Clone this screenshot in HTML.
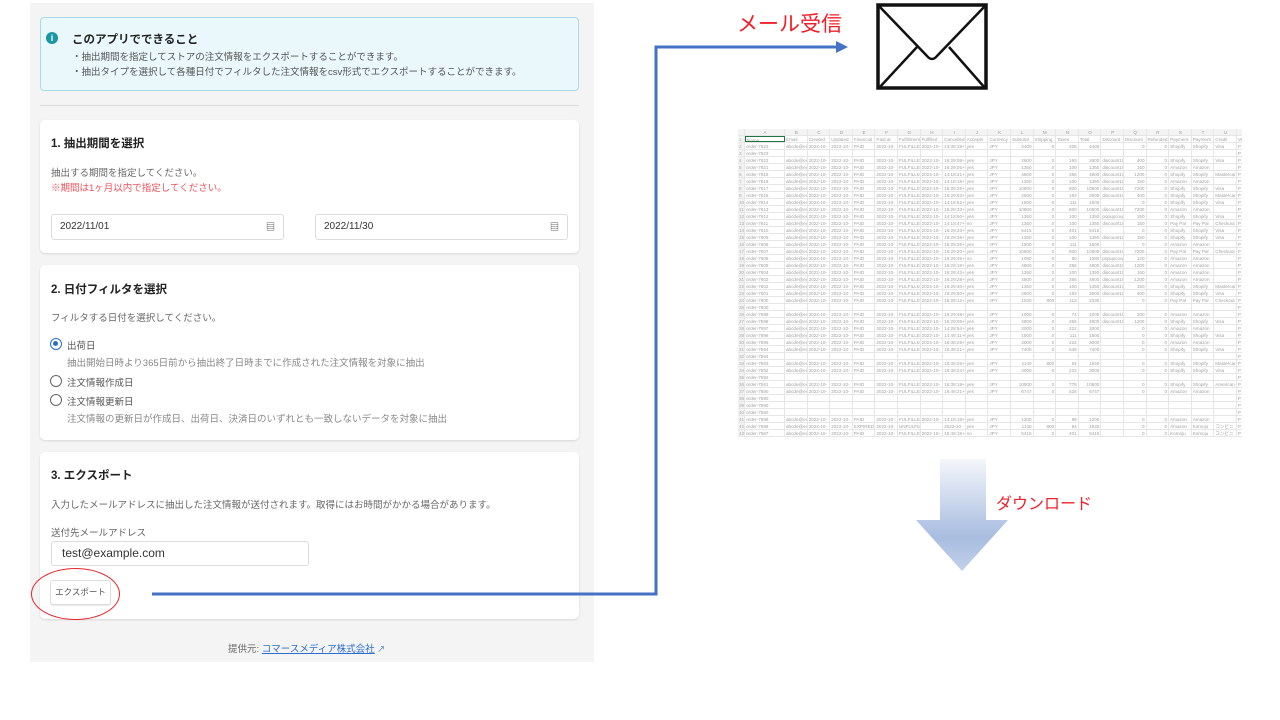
<!DOCTYPE html>
<html><head><meta charset="utf-8"><style>
*{margin:0;padding:0;box-sizing:border-box}
body{width:1280px;height:720px;background:#fff;position:relative;overflow:hidden;font-family:"Liberation Sans","Noto Sans CJK JP",sans-serif;color:#333}
.a{position:absolute;white-space:nowrap}
.panel{position:absolute;left:30px;top:3px;width:564px;height:659px;background:#f4f4f5}
.card{position:absolute;left:40px;width:539px;background:#fff;border-radius:5px;box-shadow:0 1px 2px rgba(0,0,0,.12)}
.t{font-size:11.5px;font-weight:bold;color:#222}
.s{font-size:9.5px;color:#666}
.inp{position:absolute;border:1px solid #dcdcdc;border-radius:3px;background:#fff;font-size:10px;color:#333;padding-left:8px;line-height:26px}
.rad{position:absolute;width:12px;height:12px;border:1.3px solid #666;border-radius:50%}
.sheet{position:absolute;left:738px;top:129px;width:504px;height:312px;font-family:"Liberation Sans",sans-serif;font-size:4.6px;color:#a0a0a0;overflow:hidden;background-color:#fff}
.r{position:absolute;left:0;height:7px;line-height:7px;display:flex;width:520px;border-bottom:1px solid #e6e6e6}
.r i{font-style:normal;display:block;width:22.6px;overflow:hidden;border-right:1px solid #e6e6e6;padding-left:1px;flex:none}
.r i:first-child{width:7px;color:#aaa;background:#f3f3f3}
.r i:nth-child(2){width:40px}
.r i.n{text-align:right;padding-right:1px}
</style></head><body>
<div class="panel"></div>
<div class="a" style="left:40px;top:17px;width:539px;height:74px;background:#eaf7fb;border:1px solid #a9dbe4;border-radius:4px"></div>
<div class="a" style="left:46px;top:32px;width:12px;height:12px;border-radius:50%;background:#1b97a4;color:#fff;font-size:9px;font-weight:bold;text-align:center;line-height:12px">i</div>
<div class="a t" style="left:72px;top:31px">このアプリでできること</div>
<div class="a s" style="left:72px;top:49px;color:#555">・抽出期間を指定してストアの注文情報をエクスポートすることができます。</div>
<div class="a s" style="left:72px;top:64px;color:#555">・抽出タイプを選択して各種日付でフィルタした注文情報をcsv形式でエクスポートすることができます。</div>
<div class="a" style="left:40px;top:105px;width:539px;height:1px;background:#ddd"></div>

<div class="card" style="top:120px;height:133px"></div>
<div class="a t" style="left:51px;top:135px">1. 抽出期間を選択</div>
<div class="a s" style="left:51px;top:165px">抽出する期間を指定してください。</div>
<div class="a s" style="left:51px;top:180px;color:#f0505a">※期間は1ヶ月以内で指定してください。</div>
<div class="inp" style="left:51px;top:214px;width:233px;height:26px;line-height:24px">2022/11/01<span style="position:absolute;right:8px;top:0;font-size:9px">&#x25A4;</span></div>
<div class="inp" style="left:315px;top:214px;width:253px;height:26px;line-height:24px">2022/11/30<span style="position:absolute;right:8px;top:0;font-size:9px">&#x25A4;</span></div>

<div class="card" style="top:265px;height:175px"></div>
<div class="a t" style="left:51px;top:281px">2. 日付フィルタを選択</div>
<div class="a s" style="left:51px;top:310px">フィルタする日付を選択してください。</div>
<div class="rad" style="left:50px;top:338px;border-color:#2c6ecb"><div style="position:absolute;left:2.2px;top:2.2px;width:5px;height:5px;border-radius:50%;background:#2c6ecb"></div></div>
<div class="a s" style="left:67px;top:338px;color:#555">出荷日</div>
<div class="a s" style="left:67px;top:355px;color:#888">抽出開始日時より365日前から抽出終了日時までに作成された注文情報を対象に抽出</div>
<div class="rad" style="left:50px;top:375px"></div>
<div class="a s" style="left:67px;top:375px;color:#555">注文情報作成日</div>
<div class="rad" style="left:50px;top:394px"></div>
<div class="a s" style="left:67px;top:394px;color:#555">注文情報更新日</div>
<div class="a s" style="left:67px;top:411px;color:#888">注文情報の更新日が作成日、出荷日、決済日のいずれとも一致しないデータを対象に抽出</div>

<div class="card" style="top:452px;height:167px"></div>
<div class="a t" style="left:51px;top:467px">3. エクスポート</div>
<div class="a s" style="left:51px;top:497px">入力したメールアドレスに抽出した注文情報が送付されます。取得にはお時間がかかる場合があります。</div>
<div class="a s" style="left:51px;top:525px">送付先メールアドレス</div>
<div class="inp" style="left:51px;top:541px;width:258px;height:25px;font-size:12px;padding-left:10px;line-height:23px">test@example.com</div>
<div class="a" style="left:50px;top:580px;width:61px;height:25px;border:1px solid #ddd;border-radius:3px;background:#fff;box-shadow:0 1px 1px rgba(0,0,0,.1);font-size:8.5px;color:#555;text-align:center;line-height:23px">エクスポート</div>
<div class="a" style="left:31px;top:568px;width:89px;height:52px;border:1.3px solid #e8252b;border-radius:50%"></div>
<div class="a" style="left:228px;top:641px;font-size:9.5px;color:#666">提供元: <span style="color:#2c6ecb;text-decoration:underline">コマースメディア株式会社</span> <span style="color:#2c6ecb;font-size:8px">&#x2197;</span></div>

<svg class="a" style="left:0;top:0" width="1280" height="720">
<polyline points="152,594 656,594 656,47 838,47" fill="none" stroke="#4472c4" stroke-width="3"/>
<polygon points="836,41 848,47 836,53" fill="#4472c4"/>
<rect x="878" y="5" width="108" height="83" fill="#fff" stroke="#111" stroke-width="3.5"/>
<path d="M878,5 L927,56 Q932,62 937,56 L986,5" fill="none" stroke="#111" stroke-width="2.5"/>
<path d="M879,88 L917,47 M985,88 L949,47" fill="none" stroke="#111" stroke-width="2.5"/>
<defs><linearGradient id="g" x1="0" y1="0" x2="0" y2="1"><stop offset="0" stop-color="#f4f6fb"/><stop offset="0.7" stop-color="#a8bde0"/><stop offset="1" stop-color="#c2d0ea"/></linearGradient></defs>
<polygon points="940,459 986,459 986,520 1008,520 962,571 916,520 940,520" fill="url(#g)"/>
</svg>
<div class="a" style="left:737px;top:8px;font-size:21px;color:#f0202a">メール受信</div>
<div class="a" style="left:996px;top:490px;font-size:16px;color:#f0202a">ダウンロード</div>

<div class="sheet">
<div class="r" style="top:0;background:#f3f3f3;color:#999;text-align:center"><i></i><i style="text-align:center">A</i><i>B</i><i>C</i><i>D</i><i>E</i><i>F</i><i>G</i><i>H</i><i>I</i><i>J</i><i>K</i><i>L</i><i>M</i><i>N</i><i>O</i><i>P</i><i>Q</i><i>R</i><i>S</i><i>T</i><i>U</i><i>V</i></div>
<div class="r" style="top:7px"><i>1</i><i style="border:1px solid #217346">Name</i><i>Email</i><i>Created at</i><i>Updated at</i><i>Financial Sta</i><i>Paid at</i><i>Fulfillment St</i><i>Fulfilled at</i><i>Cancelled at</i><i>Accepts Mar</i><i>Currency</i><i>Subtotal</i><i>Shipping</i><i>Taxes</i><i>Total</i><i>Discount Co</i><i>Discount Am</i><i>Refunded An</i><i>Payment Me</i><i>Payment Me</i><i>Credit Brand</i><i>Ve</i></div>
<div class="r" style="top:14px"><i>2</i><i>order-7623</i><i>abcde@exam</i><i>2022-10-07T</i><i>2022-10-11T</i><i>PAID</i><i>2022-10-07T</i><i>FULFILLED</i><i>2022-10-11T</i><i>13:38:19+09</i><i>yes</i><i>JPY</i><i class="n">4400</i><i class="n">0</i><i class="n">326</i><i class="n">4400</i><i></i><i class="n">0</i><i class="n">0</i><i>Shopify Pay</i><i>Shopify Pay</i><i>Visa</i><i>P</i></div>
<div class="r" style="top:21px"><i>3</i><i>order-7623</i><i></i><i></i><i></i><i></i><i></i><i></i><i></i><i></i><i></i><i></i><i></i><i></i><i></i><i></i><i></i><i></i><i></i><i></i><i></i><i></i><i>P</i></div>
<div class="r" style="top:28px"><i>4</i><i>order-7622</i><i>abcde@exam</i><i>2022-10-07T</i><i>2022-10-07T</i><i>PAID</i><i>2022-10-07T</i><i>FULFILLED</i><i>2022-10-07T</i><i>16:29:08+09</i><i>yes</i><i>JPY</i><i class="n">2600</i><i class="n">0</i><i class="n">193</i><i class="n">2600</i><i>discount100</i><i class="n">400</i><i class="n">0</i><i>Shopify Pay</i><i>Shopify Pay</i><i>Visa</i><i>P</i></div>
<div class="r" style="top:35px"><i>5</i><i>order-7621</i><i>abcde@exam</i><i>2022-10-07T</i><i>2022-10-07T</i><i>PAID</i><i>2022-10-07T</i><i>FULFILLED</i><i>2022-10-07T</i><i>16:29:05+09</i><i>yes</i><i>JPY</i><i class="n">1350</i><i class="n">0</i><i class="n">100</i><i class="n">1350</i><i>discount100</i><i class="n">150</i><i class="n">0</i><i>Amazon Pay</i><i>Amazon Pay</i><i></i><i>P</i></div>
<div class="r" style="top:42px"><i>6</i><i>order-7619</i><i>abcde@exam</i><i>2022-10-06T</i><i>2022-10-07T</i><i>PAID</i><i>2022-10-06T</i><i>FULFILLED</i><i>2022-10-07T</i><i>14:18:21+09</i><i>yes</i><i>JPY</i><i class="n">4800</i><i class="n">0</i><i class="n">356</i><i class="n">4800</i><i>discount100</i><i class="n">1200</i><i class="n">0</i><i>Shopify Pay</i><i>Shopify Pay</i><i>Mastercard</i><i>P</i></div>
<div class="r" style="top:49px"><i>7</i><i>order-7618</i><i>abcde@exam</i><i>2022-10-06T</i><i>2022-10-07T</i><i>PAID</i><i>2022-10-06T</i><i>FULFILLED</i><i>2022-10-07T</i><i>14:18:18+09</i><i>yes</i><i>JPY</i><i class="n">1350</i><i class="n">0</i><i class="n">100</i><i class="n">1350</i><i>discount100</i><i class="n">150</i><i class="n">0</i><i>Amazon Pay</i><i>Amazon Pay</i><i></i><i>P</i></div>
<div class="r" style="top:56px"><i>8</i><i>order-7617</i><i>abcde@exam</i><i>2022-10-06T</i><i>2022-10-06T</i><i>PAID</i><i>2022-10-06T</i><i>FULFILLED</i><i>2022-10-06T</i><i>16:29:25+09</i><i>yes</i><i>JPY</i><i class="n">10800</i><i class="n">0</i><i class="n">800</i><i class="n">10800</i><i>discount100</i><i class="n">7200</i><i class="n">0</i><i>Shopify Pay</i><i>Shopify Pay</i><i>Visa</i><i>P</i></div>
<div class="r" style="top:63px"><i>9</i><i>order-7616</i><i>abcde@exam</i><i>2022-10-06T</i><i>2022-10-06T</i><i>PAID</i><i>2022-10-06T</i><i>FULFILLED</i><i>2022-10-06T</i><i>16:29:53+09</i><i>yes</i><i>JPY</i><i class="n">2600</i><i class="n">0</i><i class="n">193</i><i class="n">2600</i><i>discount100</i><i class="n">400</i><i class="n">0</i><i>Shopify Pay</i><i>Shopify Pay</i><i>Mastercard</i><i>P</i></div>
<div class="r" style="top:70px"><i>10</i><i>order-7614</i><i>abcde@exam</i><i>2022-10-06T</i><i>2022-10-06T</i><i>PAID</i><i>2022-10-06T</i><i>FULFILLED</i><i>2022-10-06T</i><i>14:18:52+09</i><i>yes</i><i>JPY</i><i class="n">1500</i><i class="n">0</i><i class="n">111</i><i class="n">1500</i><i></i><i class="n">0</i><i class="n">0</i><i>Shopify Pay</i><i>Shopify Pay</i><i>Visa</i><i>P</i></div>
<div class="r" style="top:77px"><i>11</i><i>order-7613</i><i>abcde@exam</i><i>2022-10-06T</i><i>2022-10-06T</i><i>PAID</i><i>2022-10-06T</i><i>FULFILLED</i><i>2022-10-06T</i><i>16:29:33+09</i><i>yes</i><i>JPY</i><i class="n">10800</i><i class="n">0</i><i class="n">800</i><i class="n">10800</i><i>discount100</i><i class="n">7200</i><i class="n">0</i><i>Amazon Pay</i><i>Amazon Pay</i><i></i><i>P</i></div>
<div class="r" style="top:84px"><i>12</i><i>order-7612</i><i>abcde@exam</i><i>2022-10-06T</i><i>2022-10-06T</i><i>PAID</i><i>2022-10-06T</i><i>FULFILLED</i><i>2022-10-06T</i><i>14:18:50+09</i><i>yes</i><i>JPY</i><i class="n">1350</i><i class="n">0</i><i class="n">100</i><i class="n">1350</i><i>popupcoupon</i><i class="n">150</i><i class="n">0</i><i>Shopify Pay</i><i>Shopify Pay</i><i>Visa</i><i>P</i></div>
<div class="r" style="top:91px"><i>13</i><i>order-7611</i><i>abcde@exam</i><i>2022-10-06T</i><i>2022-10-06T</i><i>PAID</i><i>2022-10-06T</i><i>FULFILLED</i><i>2022-10-06T</i><i>14:18:47+09</i><i>no</i><i>JPY</i><i class="n">1350</i><i class="n">0</i><i class="n">100</i><i class="n">1350</i><i>discount100</i><i class="n">150</i><i class="n">0</i><i>Pay Pal Exp</i><i>Pay Pal Express</i><i>Checkout</i><i>P</i></div>
<div class="r" style="top:98px"><i>14</i><i>order-7610</i><i>abcde@exam</i><i>2022-10-06T</i><i>2022-10-06T</i><i>PAID</i><i>2022-10-06T</i><i>FULFILLED</i><i>2022-10-06T</i><i>16:29:23+09</i><i>yes</i><i>JPY</i><i class="n">5415</i><i class="n">0</i><i class="n">401</i><i class="n">5415</i><i></i><i class="n">0</i><i class="n">0</i><i>Shopify Pay</i><i>Shopify Pay</i><i>Visa</i><i>P</i></div>
<div class="r" style="top:105px"><i>15</i><i>order-7609</i><i>abcde@exam</i><i>2022-10-06T</i><i>2022-10-06T</i><i>PAID</i><i>2022-10-06T</i><i>FULFILLED</i><i>2022-10-06T</i><i>16:29:38+09</i><i>yes</i><i>JPY</i><i class="n">1350</i><i class="n">0</i><i class="n">100</i><i class="n">1350</i><i>discount100</i><i class="n">150</i><i class="n">0</i><i>Shopify Pay</i><i>Shopify Pay</i><i>Visa</i><i>P</i></div>
<div class="r" style="top:112px"><i>16</i><i>order-7608</i><i>abcde@exam</i><i>2022-10-06T</i><i>2022-10-06T</i><i>PAID</i><i>2022-10-06T</i><i>FULFILLED</i><i>2022-10-06T</i><i>16:29:35+09</i><i>yes</i><i>JPY</i><i class="n">1500</i><i class="n">0</i><i class="n">111</i><i class="n">1500</i><i></i><i class="n">0</i><i class="n">0</i><i>Amazon Pay</i><i>Amazon Pay</i><i></i><i>P</i></div>
<div class="r" style="top:119px"><i>17</i><i>order-7607</i><i>abcde@exam</i><i>2022-10-05T</i><i>2022-10-06T</i><i>PAID</i><i>2022-10-05T</i><i>FULFILLED</i><i>2022-10-06T</i><i>16:29:20+09</i><i>yes</i><i>JPY</i><i class="n">10800</i><i class="n">0</i><i class="n">800</i><i class="n">10800</i><i>discount100</i><i class="n">7200</i><i class="n">0</i><i>Pay Pal Exp</i><i>Pay Pal Express</i><i>Checkout</i><i>P</i></div>
<div class="r" style="top:126px"><i>18</i><i>order-7606</i><i>abcde@exam</i><i>2022-10-05T</i><i>2022-10-06T</i><i>PAID</i><i>2022-10-05T</i><i>FULFILLED</i><i>2022-10-06T</i><i>16:29:45+09</i><i>no</i><i>JPY</i><i class="n">1080</i><i class="n">0</i><i class="n">80</i><i class="n">1080</i><i>popupcoupon</i><i class="n">120</i><i class="n">0</i><i>Amazon Pay</i><i>Amazon Pay</i><i></i><i>P</i></div>
<div class="r" style="top:133px"><i>19</i><i>order-7605</i><i>abcde@exam</i><i>2022-10-05T</i><i>2022-10-06T</i><i>PAID</i><i>2022-10-05T</i><i>FULFILLED</i><i>2022-10-06T</i><i>16:29:18+09</i><i>yes</i><i>JPY</i><i class="n">4800</i><i class="n">0</i><i class="n">356</i><i class="n">4800</i><i>discount100</i><i class="n">1200</i><i class="n">0</i><i>Amazon Pay</i><i>Amazon Pay</i><i></i><i>P</i></div>
<div class="r" style="top:140px"><i>20</i><i>order-7604</i><i>abcde@exam</i><i>2022-10-05T</i><i>2022-10-06T</i><i>PAID</i><i>2022-10-05T</i><i>FULFILLED</i><i>2022-10-06T</i><i>16:29:43+09</i><i>yes</i><i>JPY</i><i class="n">1350</i><i class="n">0</i><i class="n">100</i><i class="n">1350</i><i>discount100</i><i class="n">150</i><i class="n">0</i><i>Amazon Pay</i><i>Amazon Pay</i><i></i><i>P</i></div>
<div class="r" style="top:147px"><i>21</i><i>order-7603</i><i>abcde@exam</i><i>2022-10-05T</i><i>2022-10-06T</i><i>PAID</i><i>2022-10-05T</i><i>FULFILLED</i><i>2022-10-06T</i><i>16:29:28+09</i><i>yes</i><i>JPY</i><i class="n">4800</i><i class="n">0</i><i class="n">356</i><i class="n">4800</i><i>discount100</i><i class="n">1200</i><i class="n">0</i><i>Amazon Pay</i><i>Amazon Pay</i><i></i><i>P</i></div>
<div class="r" style="top:154px"><i>22</i><i>order-7602</i><i>abcde@exam</i><i>2022-10-05T</i><i>2022-10-06T</i><i>PAID</i><i>2022-10-05T</i><i>FULFILLED</i><i>2022-10-06T</i><i>16:29:40+09</i><i>yes</i><i>JPY</i><i class="n">1350</i><i class="n">0</i><i class="n">100</i><i class="n">1350</i><i>discount100</i><i class="n">150</i><i class="n">0</i><i>Shopify Pay</i><i>Shopify Pay</i><i>Mastercard</i><i>P</i></div>
<div class="r" style="top:161px"><i>23</i><i>order-7601</i><i>abcde@exam</i><i>2022-10-05T</i><i>2022-10-06T</i><i>PAID</i><i>2022-10-05T</i><i>FULFILLED</i><i>2022-10-06T</i><i>16:29:50+09</i><i>yes</i><i>JPY</i><i class="n">2600</i><i class="n">0</i><i class="n">193</i><i class="n">2600</i><i>discount100</i><i class="n">400</i><i class="n">0</i><i>Shopify Pay</i><i>Shopify Pay</i><i>Visa</i><i>P</i></div>
<div class="r" style="top:168px"><i>24</i><i>order-7600</i><i>abcde@exam</i><i>2022-10-05T</i><i>2022-10-06T</i><i>PAID</i><i>2022-10-05T</i><i>FULFILLED</i><i>2022-10-06T</i><i>16:29:12+09</i><i>yes</i><i>JPY</i><i class="n">1530</i><i class="n">800</i><i class="n">113</i><i class="n">2330</i><i></i><i class="n">0</i><i class="n">0</i><i>Pay Pal Exp</i><i>Pay Pal Express</i><i>Checkout</i><i>P</i></div>
<div class="r" style="top:175px"><i>25</i><i>order-7600</i><i></i><i></i><i></i><i></i><i></i><i></i><i></i><i></i><i></i><i></i><i></i><i></i><i></i><i></i><i></i><i></i><i></i><i></i><i></i><i></i><i>P</i></div>
<div class="r" style="top:182px"><i>26</i><i>order-7599</i><i>abcde@exam</i><i>2022-10-05T</i><i>2022-10-06T</i><i>PAID</i><i>2022-10-05T</i><i>FULFILLED</i><i>2022-10-06T</i><i>16:29:48+09</i><i>yes</i><i>JPY</i><i class="n">1000</i><i class="n">0</i><i class="n">74</i><i class="n">1000</i><i>discount100</i><i class="n">200</i><i class="n">0</i><i>Amazon Pay</i><i>Amazon Pay</i><i></i><i>P</i></div>
<div class="r" style="top:189px"><i>27</i><i>order-7598</i><i>abcde@exam</i><i>2022-10-05T</i><i>2022-10-06T</i><i>PAID</i><i>2022-10-05T</i><i>FULFILLED</i><i>2022-10-06T</i><i>16:29:08+09</i><i>yes</i><i>JPY</i><i class="n">4800</i><i class="n">0</i><i class="n">356</i><i class="n">4800</i><i>discount100</i><i class="n">1200</i><i class="n">0</i><i>Shopify Pay</i><i>Shopify Pay</i><i>Visa</i><i>P</i></div>
<div class="r" style="top:196px"><i>28</i><i>order-7597</i><i>abcde@exam</i><i>2022-10-04T</i><i>2022-10-05T</i><i>PAID</i><i>2022-10-04T</i><i>FULFILLED</i><i>2022-10-05T</i><i>14:28:54+09</i><i>yes</i><i>JPY</i><i class="n">3000</i><i class="n">0</i><i class="n">222</i><i class="n">3000</i><i></i><i class="n">0</i><i class="n">0</i><i>Amazon Pay</i><i>Amazon Pay</i><i></i><i>P</i></div>
<div class="r" style="top:203px"><i>29</i><i>order-7596</i><i>abcde@exam</i><i>2022-10-04T</i><i>2022-10-05T</i><i>PAID</i><i>2022-10-04T</i><i>FULFILLED</i><i>2022-10-05T</i><i>14:49:11+09</i><i>yes</i><i>JPY</i><i class="n">1500</i><i class="n">0</i><i class="n">111</i><i class="n">1500</i><i></i><i class="n">0</i><i class="n">0</i><i>Shopify Pay</i><i>Shopify Pay</i><i>Visa</i><i>P</i></div>
<div class="r" style="top:210px"><i>30</i><i>order-7595</i><i>abcde@exam</i><i>2022-10-04T</i><i>2022-10-05T</i><i>PAID</i><i>2022-10-04T</i><i>FULFILLED</i><i>2022-10-04T</i><i>16:38:29+09</i><i>yes</i><i>JPY</i><i class="n">3000</i><i class="n">0</i><i class="n">222</i><i class="n">3000</i><i></i><i class="n">0</i><i class="n">0</i><i>Amazon Pay</i><i>Amazon Pay</i><i></i><i>P</i></div>
<div class="r" style="top:217px"><i>31</i><i>order-7594</i><i>abcde@exam</i><i>2022-10-04T</i><i>2022-10-04T</i><i>PAID</i><i>2022-10-04T</i><i>FULFILLED</i><i>2022-10-04T</i><i>16:38:21+09</i><i>yes</i><i>JPY</i><i class="n">7400</i><i class="n">0</i><i class="n">548</i><i class="n">7400</i><i></i><i class="n">0</i><i class="n">0</i><i>Shopify Pay</i><i>Shopify Pay</i><i>Visa</i><i>P</i></div>
<div class="r" style="top:224px"><i>32</i><i>order-7594</i><i></i><i></i><i></i><i></i><i></i><i></i><i></i><i></i><i></i><i></i><i></i><i></i><i></i><i></i><i></i><i></i><i></i><i></i><i></i><i></i><i>P</i></div>
<div class="r" style="top:231px"><i>33</i><i>order-7593</i><i>abcde@exam</i><i>2022-10-03T</i><i>2022-10-04T</i><i>PAID</i><i>2022-10-03T</i><i>FULFILLED</i><i>2022-10-04T</i><i>16:38:26+09</i><i>yes</i><i>JPY</i><i class="n">1140</i><i class="n">800</i><i class="n">84</i><i class="n">1940</i><i></i><i class="n">0</i><i class="n">0</i><i>Shopify Pay</i><i>Shopify Pay</i><i>Mastercard</i><i>P</i></div>
<div class="r" style="top:238px"><i>34</i><i>order-7592</i><i>abcde@exam</i><i>2022-10-03T</i><i>2022-10-04T</i><i>PAID</i><i>2022-10-03T</i><i>FULFILLED</i><i>2022-10-04T</i><i>16:38:24+09</i><i>yes</i><i>JPY</i><i class="n">3000</i><i class="n">0</i><i class="n">222</i><i class="n">3000</i><i></i><i class="n">0</i><i class="n">0</i><i>Shopify Pay</i><i>Shopify Pay</i><i>Visa</i><i>P</i></div>
<div class="r" style="top:245px"><i>35</i><i>order-7592</i><i></i><i></i><i></i><i></i><i></i><i></i><i></i><i></i><i></i><i></i><i></i><i></i><i></i><i></i><i></i><i></i><i></i><i></i><i></i><i></i><i>P</i></div>
<div class="r" style="top:252px"><i>36</i><i>order-7591</i><i>abcde@exam</i><i>2022-10-03T</i><i>2022-10-04T</i><i>PAID</i><i>2022-10-03T</i><i>FULFILLED</i><i>2022-10-04T</i><i>16:38:18+09</i><i>yes</i><i>JPY</i><i class="n">10500</i><i class="n">0</i><i class="n">778</i><i class="n">10500</i><i></i><i class="n">0</i><i class="n">0</i><i>Shopify Pay</i><i>Shopify Pay</i><i>American Ex</i><i>P</i></div>
<div class="r" style="top:259px"><i>37</i><i>order-7590</i><i>abcde@exam</i><i>2022-10-03T</i><i>2022-10-03T</i><i>PAID</i><i>2022-10-03T</i><i>FULFILLED</i><i>2022-10-03T</i><i>16:48:21+09</i><i>yes</i><i>JPY</i><i class="n">6747</i><i class="n">0</i><i class="n">525</i><i class="n">6747</i><i></i><i class="n">0</i><i class="n">0</i><i>Amazon Pay</i><i>Amazon Pay</i><i></i><i>P</i></div>
<div class="r" style="top:266px"><i>38</i><i>order-7590</i><i></i><i></i><i></i><i></i><i></i><i></i><i></i><i></i><i></i><i></i><i></i><i></i><i></i><i></i><i></i><i></i><i></i><i></i><i></i><i></i><i>P</i></div>
<div class="r" style="top:273px"><i>39</i><i>order-7590</i><i></i><i></i><i></i><i></i><i></i><i></i><i></i><i></i><i></i><i></i><i></i><i></i><i></i><i></i><i></i><i></i><i></i><i></i><i></i><i></i><i>P</i></div>
<div class="r" style="top:280px"><i>40</i><i>order-7590</i><i></i><i></i><i></i><i></i><i></i><i></i><i></i><i></i><i></i><i></i><i></i><i></i><i></i><i></i><i></i><i></i><i></i><i></i><i></i><i></i><i>P</i></div>
<div class="r" style="top:287px"><i>41</i><i>order-7589</i><i>abcde@exam</i><i>2022-10-03T</i><i>2022-10-03T</i><i>PAID</i><i>2022-10-03T</i><i>FULFILLED</i><i>2022-10-03T</i><i>14:18:18+09</i><i>yes</i><i>JPY</i><i class="n">1200</i><i class="n">0</i><i class="n">89</i><i class="n">1200</i><i></i><i class="n">0</i><i class="n">0</i><i>Amazon Pay</i><i>Amazon Pay</i><i></i><i>P</i></div>
<div class="r" style="top:294px"><i>42</i><i>order-7588</i><i>abcde@exam</i><i>2022-10-02T</i><i>2022-10-05T</i><i>EXPIRED</i><i>2022-10-02T</i><i>UNFULFILLED</i><i></i><i>2022-10-05T</i><i>yes</i><i>JPY</i><i class="n">1140</i><i class="n">800</i><i class="n">84</i><i class="n">1940</i><i></i><i class="n">0</i><i class="n">0</i><i>Amazon Pay</i><i>Komoju</i><i>コンビニ決済</i><i>P</i></div>
<div class="r" style="top:301px"><i>43</i><i>order-7587</i><i>abcde@exam</i><i>2022-10-01T</i><i>2022-10-03T</i><i>PAID</i><i>2022-10-01T</i><i>FULFILLED</i><i>2022-10-03T</i><i>16:48:18+09</i><i>no</i><i>JPY</i><i class="n">5415</i><i class="n">0</i><i class="n">401</i><i class="n">5415</i><i></i><i class="n">0</i><i class="n">0</i><i>Komoju</i><i>Komoju</i><i>コンビニ決済</i><i>P</i></div>
</div>
</body></html>
